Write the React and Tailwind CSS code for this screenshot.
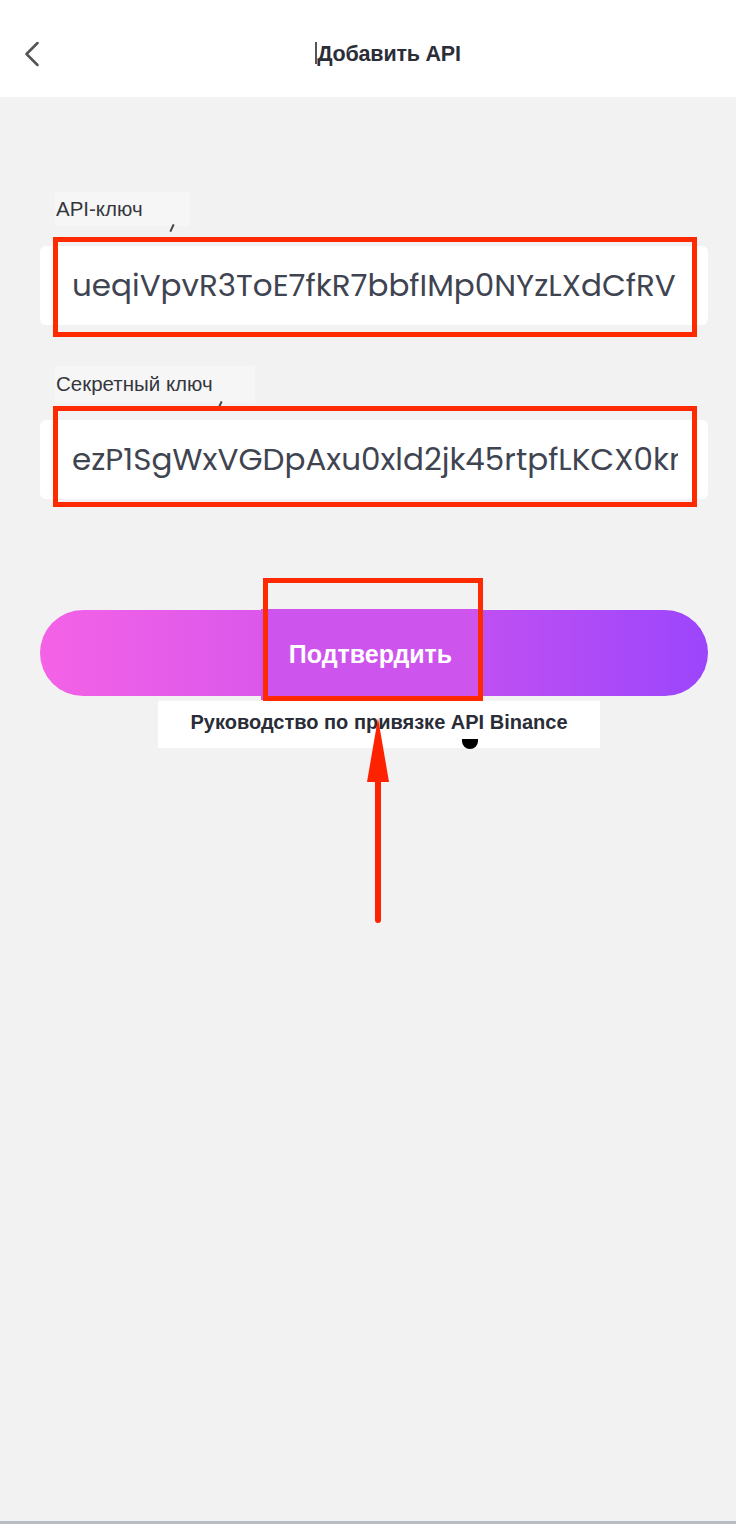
import { FiChevronLeft } from "react-icons/fi";

const KeyField = ({ label, labelWidth, labelHeight, gap, value, tickLeft, frameTop, frameBottom }) => (
  <div className="flex flex-col">
    <div
      className="relative ml-[15px] flex items-center bg-[#f6f6f6] pl-[1px]"
      style={{ width: labelWidth, height: labelHeight }}
    >
      <span className="font-['Liberation_Sans',Arial,sans-serif] text-[20.5px] text-[#35363d]">{label}</span>
      <span
        className="absolute bottom-[-6px] h-[8px] w-[2px] rotate-[25deg] bg-[#444]"
        style={{ left: tickLeft }}
      />
    </div>
    <div className="relative" style={{ marginTop: gap }}>
      <div className="flex h-[79px] items-center rounded-md bg-white pl-[32px] pr-[30px]">
        <div className="min-w-0 flex-1 overflow-hidden">
          <span className="whitespace-nowrap font-['Poppins','Inter',sans-serif] text-[31px] text-[#3f4451]">
            {value}
          </span>
        </div>
      </div>
      {/* red highlight frame */}
      <div
        className="pointer-events-none absolute left-[13px] right-[11px] border-[5px] border-[#ff2a00]"
        style={{ top: frameTop, bottom: frameBottom }}
      />
    </div>
  </div>
);

export default function App() {
  return (
    <div className="relative flex min-h-[1524px] flex-col bg-[#f2f2f2]">
      <header className="relative flex h-[97px] items-center justify-center bg-white pt-[12px]">
        <button className="absolute left-[10px] top-[32px] text-[#555]" aria-label="Back">
          <FiChevronLeft className="h-[44px] w-[44px] stroke-[1.4]" />
        </button>
        <h1 className="relative ml-[42px] font-['Liberation_Sans',Arial,sans-serif] text-[21.5px] font-bold tracking-[-0.2px] text-[#2b2d38]">
          <span className="absolute left-[-2px] top-[4px] h-[22px] w-[2px] bg-[#555]" />
          Добавить API
        </h1>
      </header>

      <main className="flex flex-col pl-[40px] pr-[28px] pt-[95px]">
        <KeyField
          label="API-ключ"
          labelWidth={135}
          labelHeight={34}
          gap={20}
          tickLeft={116}
          frameTop={-9}
          frameBottom={-12}
          value="ueqiVpvR3ToE7fkR7bbfIMp0NYzLXdCfRV"
        />
        <div className="h-[41px]" />
        <KeyField
          label="Секретный ключ"
          labelWidth={200}
          labelHeight={37}
          gap={17}
          tickLeft={164}
          frameTop={-14}
          frameBottom={-8}
          value="ezP1SgWxVGDpAxu0xld2jk45rtpfLKCX0kmQ"
        />

        <div className="relative mt-[111px]">
          <div className="h-[86px] rounded-full bg-gradient-to-r from-[#f462e6] via-[#cf52ee] to-[#9c45fc]" />
          <div className="absolute left-[221px] top-[-1px] flex h-[91px] w-[219px] items-center justify-center bg-[#cd55ee]">
            <span className="font-['Liberation_Sans',Arial,sans-serif] text-[25px] font-bold text-white">Подтвердить</span>
          </div>
          <div className="pointer-events-none absolute left-[223px] top-[-32px] h-[123px] w-[220px] border-[5px] border-[#ff2a00]" />
        </div>

        <div className="relative ml-[118px] mt-[5px] flex h-[47px] w-[442px] items-start justify-center bg-white pt-[6px]">
          <span className="font-['Liberation_Sans',Arial,sans-serif] text-[20px] font-bold text-[#2a2c37]">
            Руководство по привязке API Binance
          </span>
          <span className="absolute left-[304px] top-[38px] h-[10px] w-[16px] rounded-b-full bg-black" />
          {/* pointer arrow */}
          <svg className="absolute left-[205px] top-[17px] overflow-visible" width="30" height="206" viewBox="0 0 30 206">
            <line x1="15" y1="60" x2="15" y2="202" stroke="#ff2200" strokeWidth="6" strokeLinecap="round" />
            <polygon points="15,0 4,64 26,64" fill="#ff2200" />
          </svg>
        </div>
      </main>

      <div className="mt-auto h-[3px] bg-[#b9bcc2]" />
    </div>
  );
}
